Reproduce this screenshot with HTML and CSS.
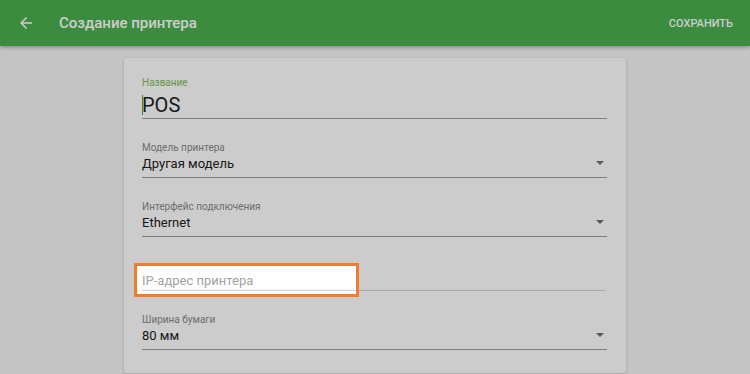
FILE: index.html
```html
<!DOCTYPE html>
<html lang="ru">
<head>
  <meta charset="UTF-8">
  <meta name="viewport" content="width=device-width, initial-scale=1.0">
  <title>Создание принтера</title>
  <link rel="stylesheet" href="styles.css">
</head>
<body>

  <!-- App bar -->
  <header class="app-bar">
    <button class="back-btn" aria-label="Назад">
      <svg width="18" height="18" viewBox="0 0 24 24"><path d="M20 11H7.83l5.59-5.59L12 4l-8 8 8 8 1.41-1.41L7.83 13H20v-2z" fill="currentColor"/></svg>
    </button>
    <h1 class="app-title">Создание принтера</h1>
    <button class="save-btn">Сохранить</button>
  </header>

  <main class="page">
    <div class="card">

      <div class="field field-big">
        <label class="field-label active">Название</label>
        <div class="field-value"><span class="caret"></span>POS</div>
      </div>

      <div class="field">
        <label class="field-label">Модель принтера</label>
        <div class="field-value select">Другая модель</div>
      </div>

      <div class="field">
        <label class="field-label">Интерфейс подключения</label>
        <div class="field-value select">Ethernet</div>
      </div>

      <div class="field field-ip">
        <label class="field-label"></label>
        <div class="field-value placeholder">IP-адрес принтера</div>
        <!-- tutorial spotlight -->
        <div class="spotlight"></div>
      </div>

      <div class="field">
        <label class="field-label">Ширина бумаги</label>
        <div class="field-value select">80 мм</div>
      </div>

    </div>
  </main>

</body>
</html>
```

FILE: styles.css
```css
body {
  margin: 0;
  padding: 0;
  font-family: Roboto, 'Liberation Sans', sans-serif;
  background: #f5f5f5;
  height: 100vh;
  overflow: hidden;
}

.app-bar {
  height: 46px;
  background: #4caf50;
  color: #fff;
  display: flex;
  align-items: center;
  box-shadow: 0 2px 3px rgba(0, 0, 0, 0.25);
}

.back-btn {
  background: none;
  border: none;
  color: #fff;
  padding: 0;
  margin-left: 17px;
  width: 18px;
  height: 18px;
  display: flex;
}

.app-title {
  margin: 0 0 0 24px;
  font-size: 15px;
  font-weight: 500;
  flex: 1;
}

.save-btn {
  background: none;
  border: none;
  color: #fff;
  font-family: inherit;
  font-size: 11px;
  font-weight: 500;
  text-transform: uppercase;
  padding: 0;
  margin-right: 17px;
}

.page {
  padding-top: 12px;
}

.card {
  width: 502px;
  box-sizing: border-box;
  margin: 0 auto;
  background: #fff;
  border-radius: 2px;
  box-shadow: 0 1px 3px rgba(0, 0, 0, 0.2);
  padding: 18px 19px 23px 18px;
}

.field {
  position: relative;
  border-bottom: 1px solid #9e9e9e;
  padding-bottom: 4px;
  margin-top: 22px;
}

.field:first-child {
  margin-top: 0;
}

.field-label {
  display: block;
  height: 14px;
  line-height: 14px;
  font-size: 10px;
  color: #8a8a8a;
}

.field-label.active {
  color: #7cbd55;
}

.field-value {
  font-size: 13px;
  line-height: 18px;
  color: #212121;
}

.field-big {
  padding-bottom: 0;
}

.field-big .field-value {
  font-size: 20px;
  line-height: 26px;
  margin-top: 2px;
  position: relative;
}

.caret {
  position: absolute;
  left: 0;
  top: 3px;
  height: 20px;
  border-left: 1px solid #4caf50;
}

.select::after {
  content: '';
  position: absolute;
  right: 3px;
  bottom: 12px;
  border-left: 4px solid transparent;
  border-right: 4px solid transparent;
  border-top: 4px solid #707070;
}

.field-ip {
  border-bottom-color: #d4d4d4;
  padding-bottom: 0;
  margin-top: 20px;
  margin-right: 2px;
}

.field-ip .field-value {
  padding-top: 1px;
}

.placeholder {
  color: #a3a3a3;
}

.spotlight {
  position: absolute;
  left: -8px;
  top: 6px;
  width: 225px;
  height: 34px;
  box-sizing: border-box;
  border: 3px solid #f07d2d;
  box-shadow: 0 0 0 2000px rgba(0, 0, 0, 0.2);
  z-index: 10;
}
```
